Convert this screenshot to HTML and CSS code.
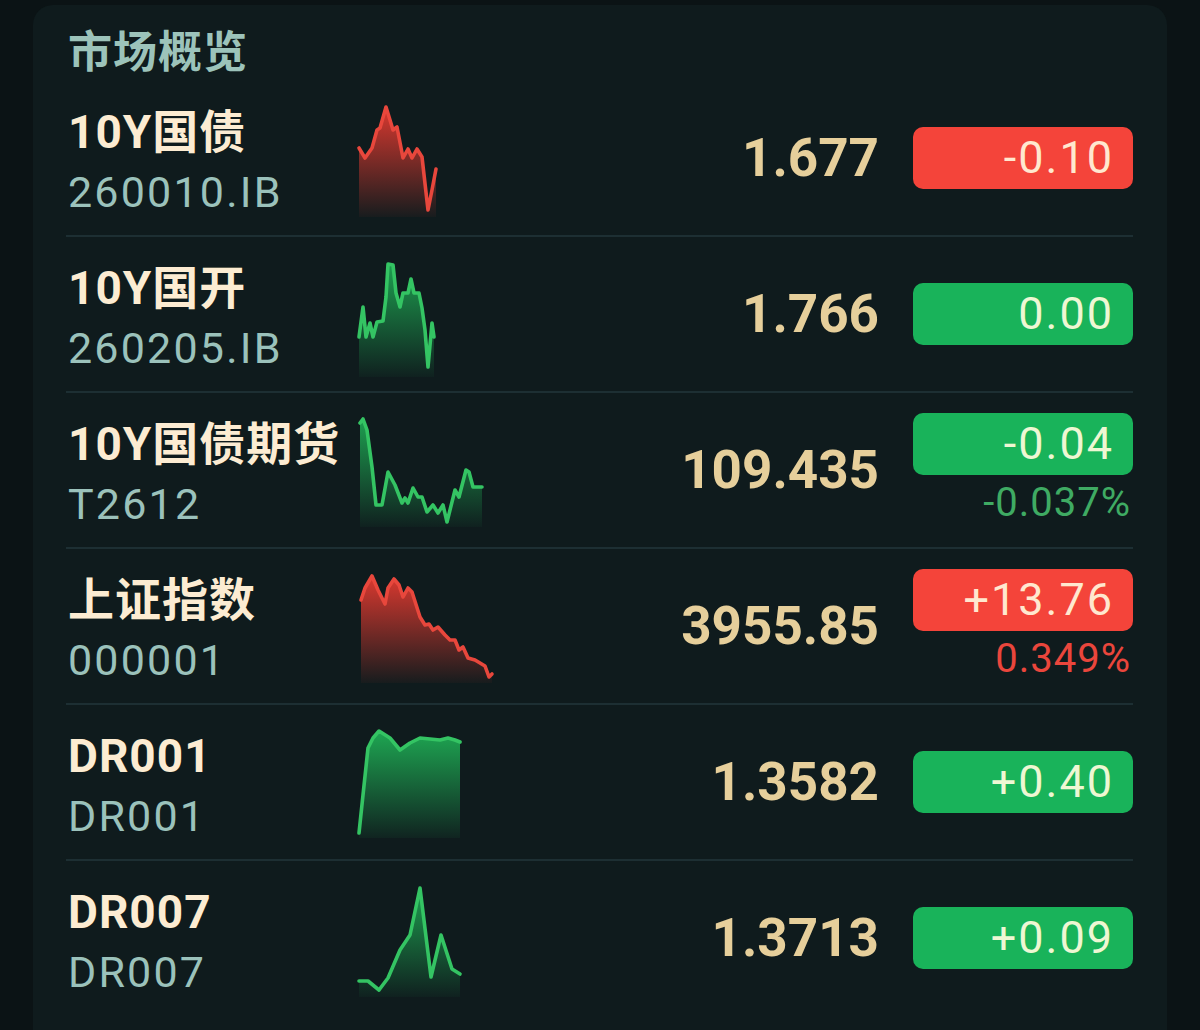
FILE: index.html
```html
<!DOCTYPE html>
<html lang="zh-CN">
<head>
  <meta charset="UTF-8">
  <meta name="viewport" content="width=device-width, initial-scale=1.0">
  <title>市场概览</title>
  <link rel="stylesheet" href="styles.css">
</head>
<body>
  <div class="card">
    <h2 class="title">市场概览</h2>

    <!-- 10Y 国债 -->
    <div class="row">
      <div class="info">
        <div class="name">10Y国债</div>
        <div class="code">260010.IB</div>
      </div>
      <svg class="spark" viewBox="0 0 150 120" width="150" height="120">
        <defs>
          <linearGradient id="fill1" x1="0" y1="0" x2="0" y2="1">
            <stop offset="0" stop-color="#e53a30" stop-opacity="0.95"/>
            <stop offset="1" stop-color="#e53a30" stop-opacity="0.04"/>
          </linearGradient>
        </defs>
        <path class="area" fill="url(#fill1)" d="M1 47 L7 57 L14 47 L19 29 L22 27 L28 6 L32 19 L35 29 L39 26 L45 57 L50 48 L54 57 L59 48 L64 56 L70 109 L74 89 L78 68 L78 116 L1 116 Z"/>
        <path class="line red" d="M1 47 L7 57 L14 47 L19 29 L22 27 L28 6 L32 19 L35 29 L39 26 L45 57 L50 48 L54 57 L59 48 L64 56 L70 109 L74 89 L78 68"/>
      </svg>
      <div class="value">1.677</div>
      <div class="change">
        <div class="badge down">-0.10</div>
      </div>
    </div>

    <!-- 10Y 国开 -->
    <div class="row">
      <div class="info">
        <div class="name">10Y国开</div>
        <div class="code">260205.IB</div>
      </div>
      <svg class="spark" viewBox="0 0 150 120" width="150" height="120">
        <defs>
          <linearGradient id="fill2" x1="0" y1="0" x2="0" y2="1">
            <stop offset="0" stop-color="#1fae55" stop-opacity="0.9"/>
            <stop offset="1" stop-color="#1fae55" stop-opacity="0.04"/>
          </linearGradient>
        </defs>
        <path class="area" fill="url(#fill2)" d="M1 80 L5 50 L8 80 L12 66 L15 80 L19 65 L25 64 L28 40 L30 7 L35 8 L38 36 L42 50 L45 36 L50 36 L53 22 L56 36 L61 36 L64 51 L67 73 L70 110 L74 66 L76 80 L76 120 L1 120 Z"/>
        <path class="line green" d="M1 80 L5 50 L8 80 L12 66 L15 80 L19 65 L25 64 L28 40 L30 7 L35 8 L38 36 L42 50 L45 36 L50 36 L53 22 L56 36 L61 36 L64 51 L67 73 L70 110 L74 66 L76 80"/>
      </svg>
      <div class="value">1.766</div>
      <div class="change">
        <div class="badge up">0.00</div>
      </div>
    </div>

    <!-- 10Y 国债期货 -->
    <div class="row">
      <div class="info">
        <div class="name">10Y国债期货</div>
        <div class="code">T2612</div>
      </div>
      <svg class="spark" viewBox="0 0 150 120" width="150" height="120">
        <defs>
          <linearGradient id="fill3" x1="0" y1="0" x2="0" y2="1">
            <stop offset="0" stop-color="#1fae55" stop-opacity="0.9"/>
            <stop offset="1" stop-color="#1fae55" stop-opacity="0.04"/>
          </linearGradient>
        </defs>
        <path class="area" fill="url(#fill3)" d="M2 10 L5 6 L9 17 L14 54 L18 92 L24 92 L30 59 L37 72 L44 90 L47 85 L50 90 L55 75 L60 84 L64 84 L69 99 L75 92 L80 100 L85 92 L89 109 L97 77 L101 84 L108 57 L111 59 L115 74 L124 74 L124 114 L2 114 Z"/>
        <path class="line green" d="M2 10 L5 6 L9 17 L14 54 L18 92 L24 92 L30 59 L37 72 L44 90 L47 85 L50 90 L55 75 L60 84 L64 84 L69 99 L75 92 L80 100 L85 92 L89 109 L97 77 L101 84 L108 57 L111 59 L115 74 L124 74"/>
      </svg>
      <div class="value">109.435</div>
      <div class="change with-pct">
        <div class="badge up">-0.04</div>
        <div class="pct up">-0.037%</div>
      </div>
    </div>

    <!-- 上证指数 -->
    <div class="row">
      <div class="info">
        <div class="name">上证指数</div>
        <div class="code">000001</div>
      </div>
      <svg class="spark" viewBox="0 0 150 120" width="150" height="120">
        <defs>
          <linearGradient id="fill4" x1="0" y1="0" x2="0" y2="1">
            <stop offset="0" stop-color="#e53a30" stop-opacity="0.95"/>
            <stop offset="1" stop-color="#e53a30" stop-opacity="0.04"/>
          </linearGradient>
        </defs>
        <path class="area" fill="url(#fill4)" d="M3 31 L7 19 L14 7 L20 21 L27 35 L30 19 L36 10 L41 16 L45 28 L50 19 L54 23 L62 48 L67 56 L71 55 L75 61 L80 58 L87 66 L92 71 L97 71 L101 81 L105 78 L110 89 L117 91 L122 94 L127 97 L131 108 L134 105 L134 114 L3 114 Z"/>
        <path class="line red" d="M3 31 L7 19 L14 7 L20 21 L27 35 L30 19 L36 10 L41 16 L45 28 L50 19 L54 23 L62 48 L67 56 L71 55 L75 61 L80 58 L87 66 L92 71 L97 71 L101 81 L105 78 L110 89 L117 91 L122 94 L127 97 L131 108 L134 105"/>
      </svg>
      <div class="value">3955.85</div>
      <div class="change with-pct">
        <div class="badge down">+13.76</div>
        <div class="pct down">0.349%</div>
      </div>
    </div>

    <!-- DR001 -->
    <div class="row">
      <div class="info">
        <div class="name">DR001</div>
        <div class="code">DR001</div>
      </div>
      <svg class="spark" viewBox="0 0 150 120" width="150" height="120">
        <defs>
          <linearGradient id="fill5" x1="0" y1="0" x2="0" y2="1">
            <stop offset="0" stop-color="#1fae55" stop-opacity="0.95"/>
            <stop offset="1" stop-color="#1fae55" stop-opacity="0.06"/>
          </linearGradient>
        </defs>
        <path class="area" fill="url(#fill5)" d="M1 108 L5 70 L10 23 L15 13 L21 6 L32 13 L42 25 L52 18 L62 13 L72 14 L82 15 L90 13 L97 15 L102 17 L102 113 L1 113 Z"/>
        <path class="line green" d="M1 108 L5 70 L10 23 L15 13 L21 6 L32 13 L42 25 L52 18 L62 13 L72 14 L82 15 L90 13 L97 15 L102 17"/>
      </svg>
      <div class="value">1.3582</div>
      <div class="change">
        <div class="badge up">+0.40</div>
      </div>
    </div>

    <!-- DR007 -->
    <div class="row">
      <div class="info">
        <div class="name">DR007</div>
        <div class="code">DR007</div>
      </div>
      <svg class="spark" viewBox="0 0 150 120" width="150" height="120">
        <defs>
          <linearGradient id="fill6" x1="0" y1="0" x2="0" y2="1">
            <stop offset="0" stop-color="#1fae55" stop-opacity="0.9"/>
            <stop offset="1" stop-color="#1fae55" stop-opacity="0.04"/>
          </linearGradient>
        </defs>
        <path class="area" fill="url(#fill6)" d="M1 100 L10 100 L21 109 L30 97 L42 69 L52 54 L62 7 L73 96 L83 54 L94 88 L102 93 L102 116 L1 116 Z"/>
        <path class="line green" d="M1 100 L10 100 L21 109 L30 97 L42 69 L52 54 L62 7 L73 96 L83 54 L94 88 L102 93"/>
      </svg>
      <div class="value">1.3713</div>
      <div class="change">
        <div class="badge up">+0.09</div>
      </div>
    </div>
  </div>
</body>
</html>
```

FILE: styles.css
```css
body {
  margin: 0;
  background-color: #0b1315;
  font-family: Roboto, "Noto Sans CJK SC", sans-serif;
  height: 1030px;
  overflow: hidden;
}

.card {
  margin: 5px 33px 0 33px;
  padding: 0 34px 0 35px;
  background-color: #0f1b1d;
  border-radius: 20px 20px 0 0;
  min-height: 1025px;
}

.title {
  margin: 0;
  height: 76px;
  line-height: 96px;
  font-size: 44px;
  font-weight: 700;
  color: #9cc3ba;
  letter-spacing: 1px;
}

.row {
  display: grid;
  grid-template-columns: 290px 150px 1fr 220px;
  height: 154px;
  border-bottom: 2px solid #1d2f33;
  margin-left: -2px;
  padding-left: 2px;
}

.row:last-child {
  border-bottom: none;
}

.info {
  padding-top: 20px;
}

.name {
  height: 60px;
  line-height: 62px;
  font-size: 46px;
  font-weight: 700;
  color: #fcecd2;
  letter-spacing: 1px;
  white-space: nowrap;
}

.code {
  height: 62px;
  line-height: 62px;
  font-size: 43px;
  color: #9bc2bb;
  letter-spacing: 2.2px;
}

.spark {
  display: block;
  margin-top: 20px;
  overflow: visible;
}

.spark .line {
  fill: none;
  stroke-width: 3.6;
  stroke-linejoin: round;
  stroke-linecap: round;
}

.spark .red {
  stroke: #e8473c;
}

.spark .green {
  stroke: #34c463;
}

.value {
  align-self: center;
  text-align: right;
  padding-right: 34px;
  font-size: 53px;
  font-weight: 700;
  color: #e6cf9b;
}

.change {
  display: flex;
  flex-direction: column;
  justify-content: center;
}

.change.with-pct {
  justify-content: flex-start;
  padding-top: 20px;
}

.badge {
  height: 62px;
  line-height: 62px;
  border-radius: 10px;
  padding-right: 19px;
  text-align: right;
  font-size: 45px;
  letter-spacing: 2px;
}

.badge.down {
  background-color: #f4443a;
  color: #ffe8cf;
}

.badge.up {
  background-color: #19b35a;
  color: #eef7d3;
}

.pct {
  height: 56px;
  line-height: 56px;
  text-align: right;
  padding-right: 2px;
  font-size: 40px;
  letter-spacing: 1px;
}

.pct.up {
  color: #3fab63;
}

.pct.down {
  color: #ea463c;
}
```
